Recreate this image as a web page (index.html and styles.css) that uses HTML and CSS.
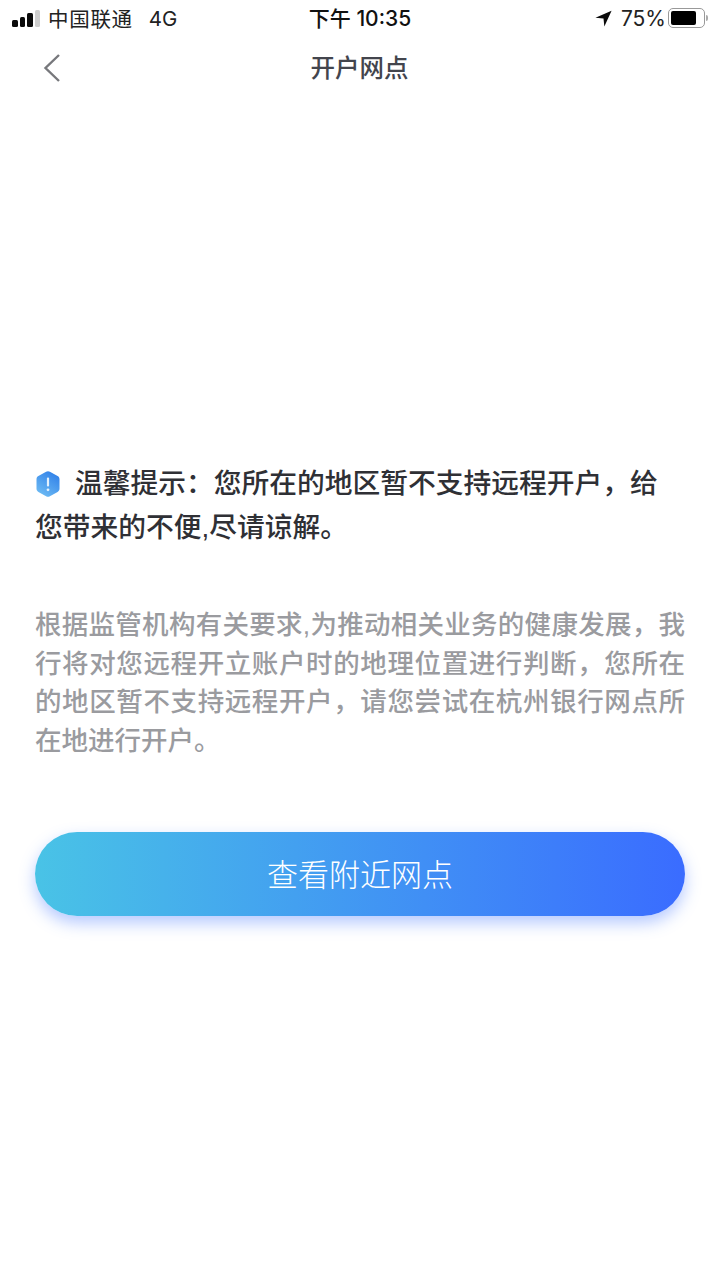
FILE: index.html
```html
<!DOCTYPE html>
<html lang="zh-CN">
<head>
<meta charset="utf-8">
<title>开户网点</title>
<link rel="stylesheet" href="styles.css">
</head>
<body>
<div class="page">
  <div class="status">
    <div class="status-left">
      <div class="signal"><i class="b1"></i><i class="b2"></i><i class="b3"></i><i class="b4"></i></div>
      <span class="carrier">中国联通</span><span class="net">4G</span>
    </div>
    <div class="status-time">下午 10:35</div>
    <div class="status-right">
      <svg class="loc" width="17" height="17" viewBox="0 0 16 16"><path d="M15.6 .6 .4 7.400 8 8l.8 7.600z" fill="#0b0b0b"/></svg>
      <span class="pct">75%</span>
      <div class="battery"><div class="battery-body"><div class="battery-fill"></div></div><div class="battery-cap"></div></div>
    </div>
  </div>
  <div class="nav">
    <svg class="back" width="20" height="30" viewBox="0 0 20 30"><path d="M17 2 3.500 15 17 28" fill="none" stroke="#77787c" stroke-width="2.400"/></svg>
    <div class="nav-title">开户网点</div>
  </div>
  <main class="content">
    <p class="notice"><svg class="hex" width="26" height="28" viewBox="0 0 26 28"><defs><linearGradient id="hexg" x1="0.2" y1="1" x2="0.8" y2="0"><stop offset="0" stop-color="#6fbdf4"/><stop offset="1" stop-color="#2f7fe8"/></linearGradient></defs><path d="M13 1.200c.7 0 1.300.2 1.900.5l7.700 4.400c1.200.7 1.900 1.800 1.900 3.200v9.400c0 1.400-.7 2.500-1.900 3.200l-7.700 4.400c-1.200.7-2.600.7-3.800 0l-7.700-4.400c-1.200-.7-1.900-1.800-1.900-3.200V9.300c0-1.400.7-2.500 1.900-3.200l7.700-4.400c.6-.3 1.200-.5 1.900-.5z" fill="url(#hexg)"/><rect x="11.900" y="7.500" width="2.200" height="9" rx="1" fill="#e4f1fd"/><circle cx="13" cy="19.800" r="1.400" fill="#e4f1fd"/></svg>温馨提示：您所在的地区暂不支持远程开户，给您带来的不便,尽请谅解。</p>
    <p class="detail">根据监管机构有关要求,为推动相关业务的健康发展，我行将对您远程开立账户时的地理位置进行判断，您所在的地区暂不支持远程开户，请您尝试在杭州银行网点所在地进行开户。</p>
    <button class="cta">查看附近网点</button>
  </main>
</div>
</body>
</html>
```
FILE: styles.css
```css
* { box-sizing: border-box; }
html, body { margin: 0; padding: 0; background: #fff; }
body { font-family: "Liberation Sans", "Noto Sans CJK SC", sans-serif; }
.page { width: 720px; height: 1280px; overflow: hidden; display: flex; flex-direction: column; }
.status { height: 36px; display: grid; grid-template-columns: 1fr auto 1fr; align-items: center; padding: 0 12px; color: #111; }
.status-left { display: flex; align-items: center; }
.signal { display: flex; align-items: flex-end; gap: 2px; margin-right: 8px; height: 17px; }
.signal i { display: block; width: 5.500px; border-radius: 1.500px; background: #0b0b0b; }
.signal .b1 { height: 7px; }
.signal .b2 { height: 10px; }
.signal .b3 { height: 14px; }
.signal .b4 { height: 17px; background: #cfcfcf; }
.carrier { font-size: 20.500px; letter-spacing: 0.700px; color: #222; }
.net { font-family: Inter, "Liberation Sans", sans-serif; font-size: 20.500px; margin-left: 16px; color: #222; }
.status-time { font-family: Inter, "Noto Sans CJK SC", sans-serif; font-size: 21px; font-weight: 500; color: #111; margin-top: -2px; }
.status-right { display: flex; align-items: center; justify-content: flex-end; }
.loc { margin-right: 9px; }
.pct { font-family: Inter, "Liberation Sans", sans-serif; font-size: 21px; color: #222; margin-right: 2px; }
.battery { display: flex; align-items: center; }
.battery-body { width: 37px; height: 20px; border: 1.500px solid #999; border-radius: 5px; padding: 2px; }
.battery-fill { width: 25px; height: 100%; background: #000; border-radius: 2px; }
.battery-cap { width: 2px; height: 6px; background: #aaa; margin-left: 1px; border-radius: 0 2px 2px 0; }
.nav { height: 66px; position: relative; display: flex; align-items: center; justify-content: center; }
.back { position: absolute; left: 42px; top: 17px; }
.nav-title { font-size: 24.500px; font-weight: 500; color: #43454d; margin-top: -5px; margin-right: 1px; }
.content { padding: 360px 35px 0; display: flex; flex-direction: column; }
.notice { margin: 0; font-size: 27.750px; line-height: 44px; font-weight: 500; color: #2f3035; }
.hex { vertical-align: -5px; margin-right: 14px; margin-left: 0; }
.detail { margin: 56px 0 0; font-size: 26.500px; line-height: 38.670px; font-weight: 500; color: #9a9b9f; text-align: justify; }
.cta { margin-top: 71px; height: 84px; width: 650px; border: 0; border-radius: 42px; background: linear-gradient(90deg, #49c3e6, #3a6cff); box-shadow: 0 7px 16px rgba(70, 120, 255, .4); color: #fff; font-family: inherit; font-size: 31px; font-weight: 300; letter-spacing: 0; padding: 0 0 2px; }
```
